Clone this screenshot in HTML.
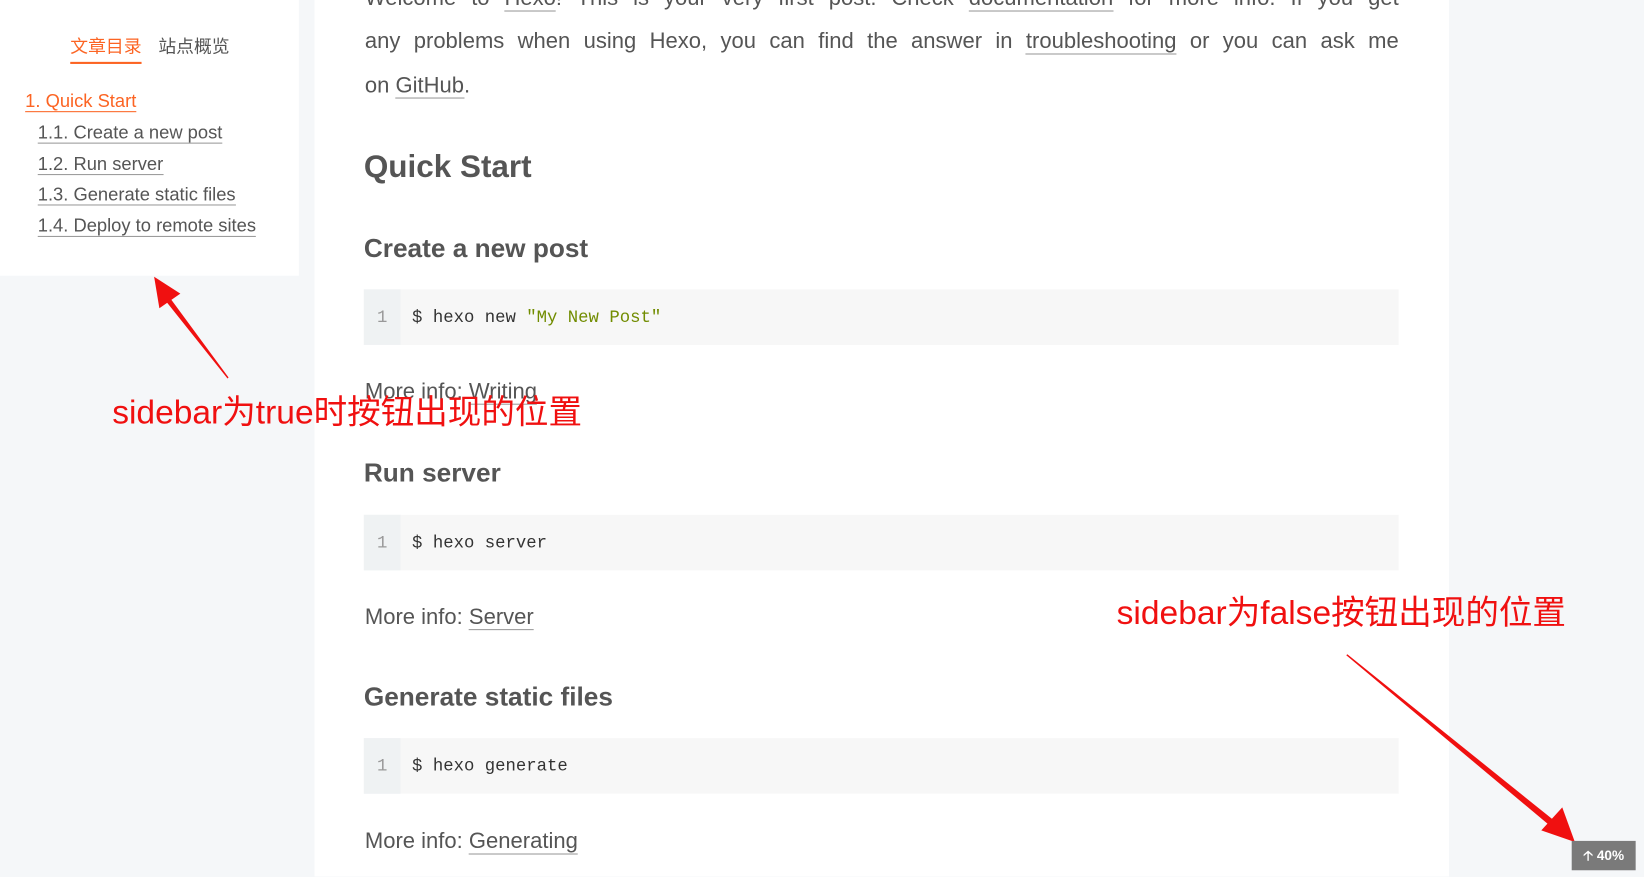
<!DOCTYPE html>
<html><head><meta charset="utf-8"><style>
html,body{margin:0;padding:0;background:#f5f7f9;overflow:hidden;width:1644px;height:876px}
#w{position:absolute;left:0;top:0;width:1568px;height:836px;transform:scale(1.0485);transform-origin:0 0;font-family:"Liberation Sans","Noto Sans CJK SC",sans-serif;color:#555}
.a{position:absolute;white-space:nowrap}
#side{position:absolute;left:0;top:0;width:285px;height:263px;background:#fff}
#main{position:absolute;left:300px;top:0;width:1082px;height:836px;background:#fff}
.u{border-bottom:1px solid #999}
.toc{font-size:17.5px;line-height:20px}
.p{font-size:21px;line-height:24px}
.h2{font-size:30px;font-weight:bold;color:#555}
.h3{font-size:25px;font-weight:bold;color:#555}
.code{position:absolute;left:347px;width:987px;height:53px;background:#f7f7f7}
.code .g{position:absolute;left:0;top:0;width:35px;height:53px;background:#eff2f3;color:#999;font:16.5px/53px "Liberation Mono",monospace;text-align:center}
.code .t{position:absolute;left:46px;top:0;font:16.5px/53px "Liberation Mono",monospace;color:#333}
.red{color:#f01010;font-size:32px}
</style></head><body><div id="w">
<div id="side"></div><div id="main"></div>
<div class="a" style="left:67px;top:30px;font-size:17px;color:#fc6423;border-bottom:2px solid #fc6423;padding-bottom:4px">文章目录</div>
<div class="a" style="left:151px;top:30px;font-size:17px;color:#555">站点概览</div>
<div class="a toc" style="left:24px;top:86px;color:#fc6423;border-bottom:1px solid #fc6423">1. Quick Start</div>
<div class="a toc u" style="left:36px;top:116px">1.1. Create a new post</div>
<div class="a toc u" style="left:36px;top:146px">1.2. Run server</div>
<div class="a toc u" style="left:36px;top:175px">1.3. Generate static files</div>
<div class="a toc u" style="left:36px;top:205px">1.4. Deploy to remote sites</div>

<div class="a p" style="left:348px;top:-13px;width:986px;text-align-last:justify;white-space:normal;text-align:justify">Welcome to <span class="u">Hexo</span>! This is your very first post. Check <span class="u">documentation</span> for more info. If you get</div>
<div class="a p" style="left:348px;top:28px;width:986px;text-align-last:justify;white-space:normal;text-align:justify">any problems when using Hexo, you can find the answer in <span class="u">troubleshooting</span> or you can ask me</div>
<div class="a p" style="left:348px;top:70px">on <span class="u">GitHub</span>.</div>

<div class="a h2" style="left:347px;top:143px">Quick Start</div>
<div class="a h3" style="left:347px;top:223px">Create a new post</div>
<div class="code" style="top:276px"><div class="g">1</div><div class="t">$ hexo new <span style="color:#718c00">"My New Post"</span></div></div>
<div class="a p" style="left:348px;top:362px">More info: <span class="u">Writing</span></div>
<div class="a h3" style="left:347px;top:437px">Run server</div>
<div class="code" style="top:491px"><div class="g">1</div><div class="t">$ hexo server</div></div>
<div class="a p" style="left:348px;top:577px">More info: <span class="u">Server</span></div>
<div class="a h3" style="left:347px;top:651px">Generate static files</div>
<div class="code" style="top:704px"><div class="g">1</div><div class="t">$ hexo generate</div></div>
<div class="a p" style="left:348px;top:791px">More info: <span class="u">Generating</span></div>

<div class="a red" style="left:107px;top:368px">sidebar为true时按钮出现的位置</div>
<div class="a red" style="left:1065px;top:559px">sidebar为false按钮出现的位置</div>

<svg class="a" style="left:0;top:0" width="1568" height="836">
<polygon points="218,360 162,284 158,287 217,361" fill="#f01010"/>
<polygon points="147,264 152,294 172,280" fill="#f01010"/>
<polygon points="1285,624 1484,784 1480,789 1284,625" fill="#f01010"/>
<polygon points="1502,803 1470,792 1490,770" fill="#f01010"/>
</svg>
<div class="a" style="left:1499px;top:802px;width:61px;height:28px;background:#7a7a7a;color:#fff;font-size:13px;line-height:28px;text-align:center;font-weight:bold">🡡 40%</div>
</div></body></html>
